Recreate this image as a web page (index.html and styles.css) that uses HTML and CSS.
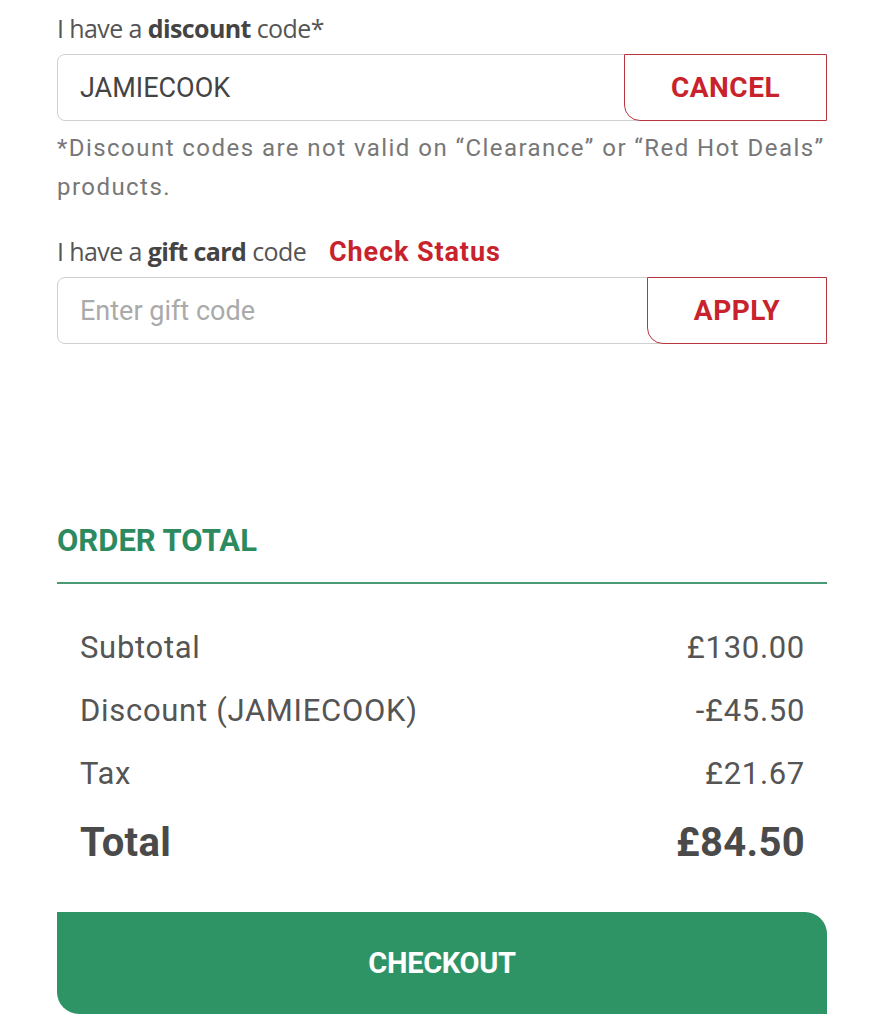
FILE: index.html
```html
<!DOCTYPE html>
<html>
<head>
<meta charset="utf-8">
<link rel="stylesheet" href="styles.css">
</head>
<body>
<div class="page">
  <div class="label">I have a <b>discount</b> code*</div>
  <div class="field">
    <div class="input value">JAMIECOOK</div>
    <button class="action cancel">CANCEL</button>
  </div>
  <p class="note">*Discount codes are not valid on “Clearance” or “Red Hot Deals” products.</p>

  <div class="label gift">I have a <b>gift card</b> code <span class="check">Check Status</span></div>
  <div class="field">
    <div class="input placeholder">Enter gift code</div>
    <button class="action apply">APPLY</button>
  </div>

  <h2 class="heading">ORDER TOTAL</h2>
  <div class="rows">
    <div class="row"><span>Subtotal</span><span>£130.00</span></div>
    <div class="row"><span>Discount (JAMIECOOK)</span><span>-£45.50</span></div>
    <div class="row"><span>Tax</span><span>£21.67</span></div>
    <div class="row total"><span>Total</span><span>£84.50</span></div>
  </div>
  <button class="checkout">CHECKOUT</button>
</div>
</body>
</html>
```
FILE: styles.css
```css
html, body { margin: 0; padding: 0; background: #fff; }
.page {
  width: 770px;
  margin-left: 57px;
  padding-top: 10px;
  font-family: "Open Sans", sans-serif;
  color: #555;
}
.label {
  font-size: 25px;
  letter-spacing: -0.6px;
  line-height: 36px;
  color: #555;
  height: 44px;
}
.label b { color: #444; font-weight: 700; }
.gift { margin-top: 0; }
.check {
  font-family: Roboto, sans-serif;
  font-weight: 700;
  color: #c8232c;
  font-size: 27px;
  letter-spacing: 0.9px;
  margin-left: 17px;
}
.field {
  display: flex;
  height: 67px;
  border: 1px solid #cfcfcf;
  border-radius: 8px;
  box-sizing: border-box;
  position: relative;
}
.input {
  flex: 1;
  display: flex;
  align-items: center;
  padding-left: 22px;
  font-family: Roboto, sans-serif;
  font-size: 27px;
  letter-spacing: 0;
}
.value { color: #444; }
.placeholder { color: #aaa; }
.action {
  margin: -1px -1px -1px 0;
  background: #fff;
  border: 1.5px solid #b8363e;
  border-radius: 0 0 0 16px;
  font-family: Roboto, sans-serif;
  font-weight: 700;
  font-size: 28px;
  color: #c8232c;
  letter-spacing: 0.5px;
  padding: 0;
}
.cancel { width: 203px; }
.apply { width: 180px; }
.note {
  margin: 8px 0 0;
  font-family: Roboto, sans-serif;
  font-size: 24px;
  line-height: 39px;
  letter-spacing: 1.45px;
  color: #777;
  height: 104px;
}
.heading {
  margin: 173px 0 0;
  font-family: Roboto, sans-serif;
  font-weight: 700;
  font-size: 31px;
  color: #2d8a5f;
  letter-spacing: 0;
  line-height: 48px;
  padding-bottom: 17px;
  border-bottom: 2px solid #4a9a76;
}
.rows { padding: 32px 22px 0 23px; }
.row {
  display: flex;
  justify-content: space-between;
  font-family: Roboto, sans-serif;
  font-size: 31px;
  line-height: 63px;
  color: #555;
  letter-spacing: 0.7px;
}
.row.total {
  font-weight: 700;
  font-size: 40px;
  line-height: 76px;
  color: #4a4a4a;
  letter-spacing: 0.3px;
}
.checkout {
  display: block;
  margin-top: 31px;
  width: 770px;
  height: 102px;
  border: none;
  background: #2e9466;
  color: #fff;
  border-radius: 0 22px 0 22px;
  font-family: Roboto, sans-serif;
  font-weight: 700;
  font-size: 29px;
  letter-spacing: -0.3px;
}
```
